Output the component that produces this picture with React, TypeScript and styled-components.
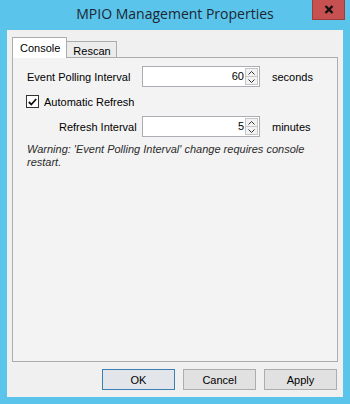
import styled, { createGlobalStyle } from "styled-components";

const GlobalStyle = createGlobalStyle`
  html, body {
    margin: 0;
    padding: 0;
    background: #5bc4ea;
  }
  * {
    box-sizing: border-box;
  }
`;

const Spin = () => (
  <SpinBox>
    <SpinHalf>
      <svg width="7" height="4" viewBox="0 0 7 4">
        <path d="M0.5 3.5 L3.5 0.5 L6.5 3.5" fill="none" stroke="#333" strokeWidth="1" />
      </svg>
    </SpinHalf>
    <SpinHalf>
      <svg width="7" height="4" viewBox="0 0 7 4">
        <path d="M0.5 0.5 L3.5 3.5 L6.5 0.5" fill="none" stroke="#333" strokeWidth="1" />
      </svg>
    </SpinHalf>
  </SpinBox>
);

const NumberBox = ({ value }: { value: string }) => (
  <Numeric>
    <Value>{value}</Value>
    <Spin />
  </Numeric>
);

const App = () => {
  return (
    <Window>
      <GlobalStyle />
      <TitleBar>
        <TitleSpacer />
        <Title>MPIO Management Properties</Title>
        <CloseButton>
          <svg width="10" height="9" viewBox="0 0 10 9">
            <path d="M1.5 1 L8.5 8 M8.5 1 L1.5 8" stroke="#111" strokeWidth="2.4" />
          </svg>
        </CloseButton>
      </TitleBar>
      <Client>
        <TabStrip>
          <Tab $active>Console</Tab>
          <Tab>Rescan</Tab>
        </TabStrip>
        <Panel>
          <Form>
            <Label>Event Polling Interval</Label>
            <NumberBox value="60" />
            <Unit>seconds</Unit>
            <CheckRow>
              <CheckBox>
                <svg width="9" height="8" viewBox="0 0 9 8">
                  <path d="M0.8 4 L3.3 6.5 L8.2 1" fill="none" stroke="#111" strokeWidth="1.8" />
                </svg>
              </CheckBox>
              <span>Automatic Refresh</span>
            </CheckRow>
            <Label $indent={32}>Refresh Interval</Label>
            <NumberBox value="5" />
            <Unit>minutes</Unit>
          </Form>
          <Warning>
            Warning: 'Event Polling Interval' change requires console restart.
          </Warning>
        </Panel>
        <ButtonRow>
          <Button $default>OK</Button>
          <Button>Cancel</Button>
          <Button>Apply</Button>
        </ButtonRow>
      </Client>
    </Window>
  );
};

export default App;

const Window = styled.div`
  width: 350px;
  height: 404px;
  background: #5bc4ea;
  display: flex;
  flex-direction: column;
  font-family: "Liberation Sans", Arial, sans-serif;
  font-size: 11px;
  color: #000;
`;

const TitleBar = styled.div`
  height: 30px;
  display: flex;
  align-items: flex-start;
`;

const TitleSpacer = styled.div`
  width: 38px;
`;

const Title = styled.div`
  flex: 1;
  text-align: center;
  font-family: "Open Sans", "Noto Sans", sans-serif;
  font-size: 14px;
  line-height: 28px;
  color: #1b2733;
`;

const CloseButton = styled.div`
  width: 33px;
  height: 20px;
  margin-right: 5px;
  background: #c75050;
  border: 1px solid #a23c38;
  border-top: none;
  display: flex;
  align-items: center;
  justify-content: center;
`;

const Client = styled.div`
  flex: 1;
  margin: 0 7px 7px;
  background: #f0f0f0;
  padding: 7px 5px 7px 5px;
  display: flex;
  flex-direction: column;
`;

const TabStrip = styled.div`
  display: flex;
  align-items: flex-end;
  height: 21px;
  margin-bottom: -1px;
`;

const Tab = styled.div<{ $active?: boolean }>`
  position: relative;
  z-index: ${(p) => (p.$active ? 1 : 0)};
  height: ${(p) => (p.$active ? "21px" : "17px")};
  padding: ${(p) => (p.$active ? "3px 6px 0 7px" : "2px 5px 0 6px")};
  border: 1px solid #acacac;
  border-bottom: ${(p) => (p.$active ? "none" : "1px solid #acacac")};
  border-left: ${(p) => (p.$active ? "1px solid #acacac" : "none")};
  background: ${(p) => (p.$active ? "#ffffff" : "#ececec")};
  line-height: 14px;
`;

const Panel = styled.div`
  flex: 1;
  border: 1px solid #acacac;
  background: #f3f3f3;
  padding: 8px 0 0 14px;
`;

const Form = styled.div`
  display: grid;
  grid-template-columns: 103px 118px auto;
  grid-template-rows: 21px 29px 21px;
  column-gap: 12px;
  align-items: center;
`;

const Label = styled.div<{ $indent?: number }>`
  padding-left: ${(p) => p.$indent ?? 0}px;
  white-space: nowrap;
`;

const Unit = styled.div`
  color: #000;
`;

const CheckRow = styled.div`
  grid-column: 1 / -1;
  display: flex;
  align-items: center;
  gap: 5px;
  margin-left: -1px;
`;

const CheckBox = styled.div`
  width: 13px;
  height: 13px;
  border: 1px solid #333;
  background: #fff;
  display: flex;
  align-items: center;
  justify-content: center;
`;

const Numeric = styled.div`
  height: 21px;
  border: 1px solid #abadb3;
  background: #fff;
  display: flex;
  align-items: stretch;
`;

const Value = styled.div`
  flex: 1;
  text-align: right;
  padding-right: 1px;
  line-height: 19px;
`;

const SpinBox = styled.div`
  width: 13px;
  margin: 1px 1px 1px 0;
  display: flex;
  flex-direction: column;
`;

const SpinHalf = styled.div`
  flex: 1;
  background: #f2f2f2;
  border: 1px solid #c6c6c6;
  display: flex;
  align-items: center;
  justify-content: center;
  & + & {
    border-top: none;
  }
`;

const Warning = styled.div`
  width: 300px;
  margin-top: 6px;
  font-style: italic;
  line-height: 13px;
  color: #2b2b2b;
`;

const ButtonRow = styled.div`
  display: flex;
  justify-content: flex-end;
  gap: 8px;
  padding: 7px 1px 0 0;
`;

const Button = styled.div<{ $default?: boolean }>`
  width: 73px;
  height: 21px;
  border: 1px solid ${(p) => (p.$default ? "#3c7fb1" : "#adadad")};
  background: ${(p) => (p.$default ? "#e2e6ea" : "#e1e1e1")};
  display: flex;
  align-items: center;
  justify-content: center;
`;
